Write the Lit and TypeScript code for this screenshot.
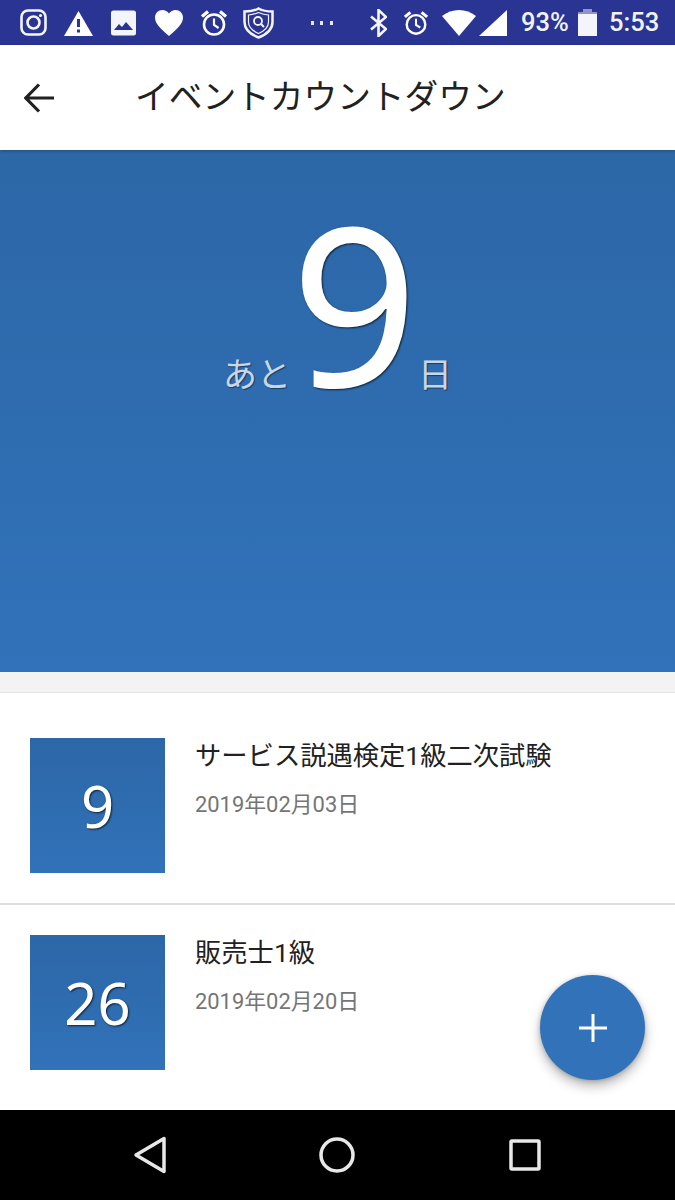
import { LitElement, html, css, svg } from "lit";
import { customElement } from "lit/decorators.js";

const alarm = (w = 28, h = 28) => svg`<svg class="ic" width=${w} height=${h} viewBox="0 0 28 28" fill="none" stroke="#fff">
  <circle cx="14" cy="15.5" r="10" stroke-width="2.6"/>
  <path d="M14 9.5v6.5l4.6 3" stroke-width="2.2"/>
  <path d="M2 7.5 8 2.5M26 7.5 20 2.5" stroke-width="3.2"/></svg>`;

@customElement("app-root")
export class AppRoot extends LitElement {
  static styles = css`
    :host { display: block; width: 675px; height: 1200px; position: relative; overflow: hidden; background: #fff;
      font-family: Roboto, "Noto Sans CJK JP", sans-serif; }
    .status { height: 45px; background: #2a3593; display: flex; align-items: center; color: #f2f3fa; box-sizing: border-box; padding-left: 20px; }
    .ic { display: block; flex: none; }
    .l1 { margin-left: 17px; } .l2 { margin-left: 18px; } .l3 { margin-left: 19px; } .l4 { margin-left: 17px; } .l5 { margin-left: 15px; }
    .dots { margin-left: 37px; }
    .bt { margin-left: 37px; }
    .r1 { margin-left: 16px; } .r2 { margin-left: 13px; } .r3 { margin-left: 3px; }
    .pct { margin-left: 14px; font-size: 25.5px; font-weight: 500; line-height: 45px; width: 50px; white-space: nowrap; }
    .batt { margin-left: 7px; }
    .time { margin-left: 12px; font-size: 25.5px; font-weight: 500; line-height: 45px; white-space: nowrap; }
    .bar { height: 105px; display: flex; align-items: center; background: #fff; position: relative; z-index: 1; box-shadow: 0 1px 3px rgba(0,0,0,.25); }
    .back { margin-left: 24px; }
    .title { margin-left: 81px; font-size: 33.7px; color: #212121; white-space: nowrap; line-height: 42px; padding-top: 1px; }
    .hero { height: 522px; box-sizing: border-box; background: linear-gradient(#2c67a7, #3172b9); display: flex; justify-content: center; align-items: baseline; padding-top: 40px; }
    .side { font-size: 34px; color: #c9d6e6; text-shadow: 1px 1px 1px rgba(0,0,0,.45); line-height: 34px; }
    .big { font-family: "Noto Sans", sans-serif; font-weight: 400; font-size: 222px; line-height: 222px; color: #fff; text-shadow: 1px 1px 2px rgba(0,0,0,.7); }
    .gap { height: 20px; background: #f3f3f3; border-bottom: 1px solid #e3e3e3; }
    .row { display: flex; gap: 30px; padding: 30px 30px 30px; border-bottom: 2px solid #dedede; height: 135px; }
    .row.first { padding-top: 45px; }
    .row.last { border-bottom: none; padding-bottom: 0; height: 175px; }
    .sq { width: 135px; height: 135px; background: linear-gradient(#2c67a7, #3172b9); color: #fff; display: flex; align-items: center; justify-content: center;
      font-family: "Noto Sans", sans-serif; font-weight: 400; font-size: 58px; text-shadow: 1px 1px 2px rgba(0,0,0,.7); flex: none; }
    .name { font-size: 26.3px; line-height: 36px; color: #212121; white-space: nowrap; }
    .date { font-size: 21.9px; line-height: 30px; margin-top: 16px; color: #757575; white-space: nowrap; }
    .nav { height: 90px; background: #000; display: flex; align-items: center; }
    .n1 { margin-left: 133px; } .n2 { margin-left: 152px; } .n3 { margin-left: 154px; }
    .fab { position: absolute; left: 540px; top: 975px; width: 105px; height: 105px; border-radius: 50%; background: #3172b9; box-shadow: 0 6px 12px rgba(0,0,0,.28), 0 1px 4px rgba(0,0,0,.2); display: flex; align-items: center; justify-content: center; }
  `;

  row(n: string, name: string, date: string, cls: string) {
    return html`<div class="row ${cls}">
      <div class="sq">${n}</div>
      <div><div class="name">${name}</div><div class="date">${date}</div></div>
    </div>`;
  }

  render() {
    return html`
      <div class="status">
        <svg class="ic" width="27" height="27" viewBox="0 0 27 27" fill="none" stroke="#f4f5fb"><rect x="1.5" y="1.5" width="24" height="24" rx="6.5" stroke-width="2.6"/><circle cx="13.5" cy="13.5" r="6" stroke-width="2.6"/><circle cx="20.5" cy="6.5" r="1.6" fill="#f4f5fb" stroke="none"/></svg>
        <svg class="ic l1" width="29" height="26" viewBox="0 0 29 26"><path d="M14.5 1 29 26H0Z" fill="#fff"/><path d="M13 9h3v8h-3zM13 19.5h3v3h-3z" fill="#2a3593"/></svg>
        <svg class="ic l2" width="25" height="26" viewBox="0 0 25 26"><rect width="25" height="25" y=".5" rx="2.5" fill="#f4f5fb"/><path d="M3 20l5-6 3 3 4-5 7 8z" fill="#2a3593"/></svg>
        <svg class="ic l3" width="28" height="26" viewBox="0 0 28 26"><path d="M14 26C6 19 0 14 0 7.500 0 3 3.500 0 7.500 0 10 0 12.500 1.200 14 3.500 15.500 1.200 18 0 20.500 0 24.500 0 28 3 28 7.500 28 14 22 19 14 26Z" fill="#fff"/></svg>
        <span class="l4">${alarm()}</span>
        <svg class="ic l5" width="31" height="32" viewBox="0 0 31 32" fill="none" stroke="#f4f5fb"><path d="M15.500 1.500C20 4 25 4.500 29.500 4.500V15C29.500 23 22 28 15.500 30.500 9 28 1.500 23 1.500 15V4.500C6 4.500 11 4 15.500 1.500Z" stroke-width="2.500"/><path d="M15.500 5.500C19 7 22.500 7.800 25.500 8V15C25.500 20.500 20 24.500 15.500 26.500 11 24.500 5.500 20.500 5.500 15V8C8.500 7.800 12 7 15.500 5.500Z" stroke-width="1.200"/><circle cx="15" cy="14" r="4" stroke-width="1.800"/><path d="m18 17 3 3" stroke-width="2"/></svg>
        <svg class="ic dots" width="22" height="4" viewBox="0 0 22 4" fill="#e6e8f5"><rect x="0" width="3" height="4"/><rect x="9" width="3" height="4"/><rect x="19" width="3" height="4"/></svg>
        <svg class="ic bt" width="17" height="28" viewBox="0 0 17 28" fill="none" stroke="#f4f5fb" stroke-width="2.600"><path d="M1 7.500 16 20 8.500 27V1L16 8 1 20.500"/></svg>
        <span class="r1">${alarm(26, 26)}</span>
        <svg class="ic r2" width="34" height="26" viewBox="0 0 34 26"><path d="M17 26 0 6C5 2 11 0 17 0s12 2 17 6Z" fill="#fff"/></svg>
        <svg class="ic r3" width="28" height="26" viewBox="0 0 28 26"><path d="M28 0v26H0Z" fill="#fff"/></svg>
        <span class="pct">93%</span>
        <svg class="ic batt" width="19" height="27" viewBox="0 0 19 27"><path d="M5 0h9v3H5z" fill="#8f95c9"/><path d="M0 3h19v3H0z" fill="#8f95c9"/><path d="M0 5h19v22H0z" fill="#f4f5fb"/></svg>
        <span class="time">5:53</span>
      </div>
      <div class="bar">
        <svg class="ic back" width="30" height="30" viewBox="0 0 30 30" fill="none" stroke="#212121" stroke-width="3.2"><path d="M1 15h29M15 1.500 1.800 15 15 28.500"/></svg>
        <div class="title">イベントカウントダウン</div>
      </div>
      <div class="hero">
        <span class="side">あと</span><span class="big">9</span><span class="side">日</span>
      </div>
      <div class="gap"></div>
      ${this.row("9", "サービス説遇検定1級二次試験", "2019年02月03日", "first")}
      ${this.row("26", "販売士1級", "2019年02月20日", "last")}
      <div class="nav">
        <svg class="ic n1" width="34" height="38" viewBox="0 0 34 38" fill="none" stroke="#e8e8e8" stroke-width="3.500" stroke-linejoin="round"><path d="M31 2.500V35.500L3 19Z"/></svg>
        <svg class="ic n2" width="36" height="36" viewBox="0 0 36 36" fill="none" stroke="#e8e8e8" stroke-width="3.500"><circle cx="18" cy="18" r="16"/></svg>
        <svg class="ic n3" width="32" height="32" viewBox="0 0 32 32" fill="none" stroke="#e8e8e8" stroke-width="3.500" stroke-linejoin="round"><rect x="2" y="2" width="28" height="28" rx="1"/></svg>
      </div>
      <div class="fab"><svg class="ic" width="28" height="28" viewBox="0 0 28 28" stroke="#fff" stroke-width="3"><path d="M14 0v28M0 14h28"/></svg></div>
    `;
  }
}
